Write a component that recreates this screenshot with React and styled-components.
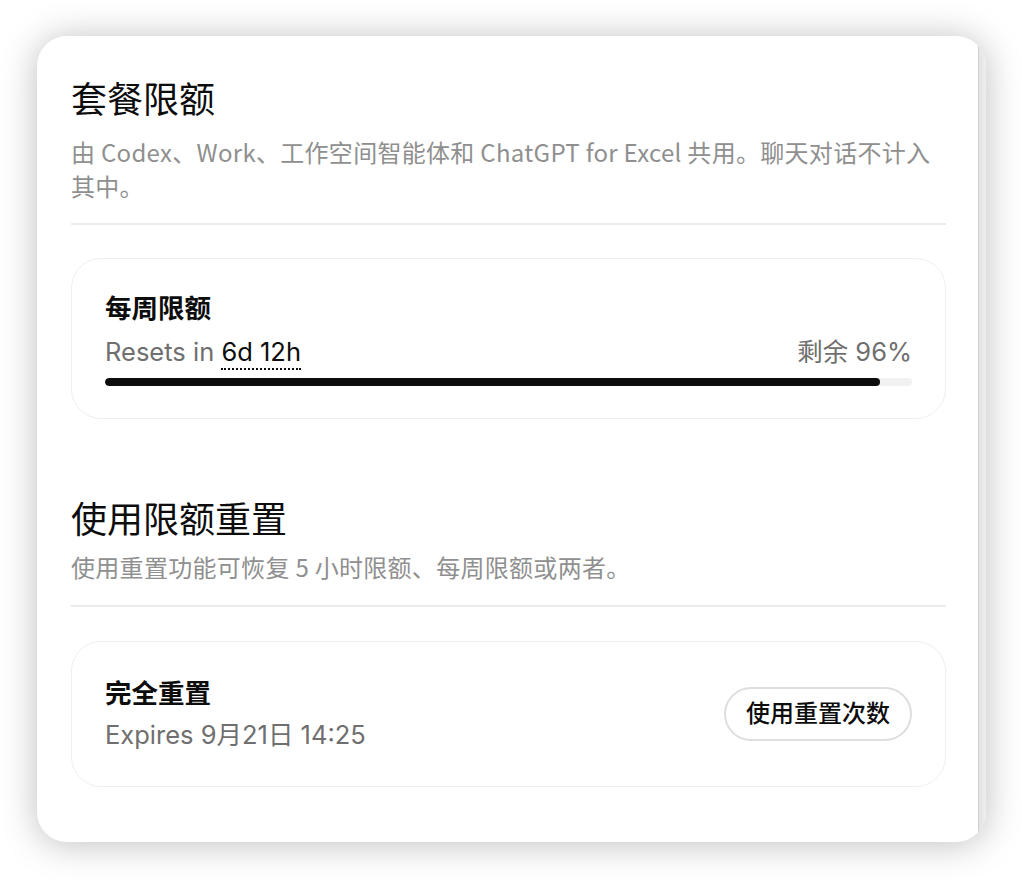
import React from "react";
import styled, { createGlobalStyle } from "styled-components";

const Global = createGlobalStyle`
  html, body { margin: 0; padding: 0; background: #ffffff; }
  body {
    font-family: "Inter", "Noto Sans CJK SC", sans-serif;
    color: #0d0d0d;
    -webkit-font-smoothing: antialiased;
  }
  * { box-sizing: border-box; }
`;

const Page = styled.div`
  padding: 36px 0 37px 37px;
`;

const Panel = styled.div`
  width: 949px;
  display: flex;
  background: #ffffff;
  border-radius: 30px;
  overflow: hidden;
  box-shadow: 0 2px 36px rgba(0, 0, 0, 0.26);
`;

const Content = styled.div`
  flex: 1;
  display: flex;
  flex-direction: column;
  padding: 42px 32px 55px 34px;
`;

const Gutter = styled.div`
  width: 8px;
  flex: none;
  border-left: 1px solid #d0d0d0;
  background: linear-gradient(to right, #e3e3e3, #eeeeee);
`;

const SectionTitle = styled.h2`
  margin: ${(p) => p.$top || 0}px 0 0;
  font-size: 36px;
  line-height: 44px;
  font-weight: 400;
  color: #0d0d0d;
`;

const Description = styled.p`
  margin: ${(p) => p.$top}px 0 0;
  font-family: "Noto Sans CJK SC", sans-serif;
  font-size: 24px;
  line-height: 34px;
  letter-spacing: 0.3px;
  color: #8f8f8f;
`;

const Divider = styled.hr`
  margin: ${(p) => p.$top}px 0 0;
  border: none;
  height: 2px;
  background: #ebebeb;
`;

const Card = styled.div`
  margin-top: ${(p) => p.$top}px;
  border: 1px solid #efefef;
  border-radius: 30px;
  padding: ${(p) => p.$pad}px 33px;
  display: flex;
  flex-direction: ${(p) => (p.$row ? "row" : "column")};
  align-items: ${(p) => (p.$row ? "center" : "stretch")};
  justify-content: space-between;
`;

const CardTitle = styled.div`
  font-size: 26.5px;
  line-height: 34px;
  font-weight: 600;
  color: #0d0d0d;
`;

const InfoRow = styled.div`
  margin-top: ${(p) => p.$gap}px;
  display: flex;
  justify-content: space-between;
  font-size: 25.5px;
  line-height: 34px;
  color: #6f6f6f;
`;

const Dotted = styled.span`
  color: #0d0d0d;
  border-bottom: 2px dotted #0d0d0d;
  padding-bottom: 1px;
`;

const Track = styled.div`
  margin-top: 9px;
  height: 8px;
  border-radius: 4px;
  background: #f1f1f1;
  overflow: hidden;
`;

const Fill = styled.div`
  height: 100%;
  border-radius: 4px;
  background: #0d0d0d;
`;

const Stack = styled.div`
  display: flex;
  flex-direction: column;
`;

const PillButton = styled.button`
  font-family: inherit;
  font-size: 24px;
  font-weight: 500;
  line-height: 32px;
  color: #0d0d0d;
  background: #ffffff;
  border: 2px solid #dedede;
  border-radius: 999px;
  height: 54px;
  padding: 0 20px;
  cursor: pointer;
`;

export default function App() {
  const remaining = 96;
  return (
    <>
      <Global />
      <Page lang="zh-CN">
        <Panel>
          <Content>
            <SectionTitle>套餐限额</SectionTitle>
            <Description $top={13}>
              由 Codex、Work、工作空间智能体和 ChatGPT for Excel 共用。聊天对话不计入其中。
            </Description>
            <Divider $top={20} />
            <Card $top={33} $pad={32}>
              <CardTitle>每周限额</CardTitle>
              <InfoRow $gap={10}>
                <span>
                  Resets in <Dotted>6d 12h</Dotted>
                </span>
                <span>剩余 {remaining}%</span>
              </InfoRow>
              <Track>
                <Fill style={{ width: `${remaining}%` }} />
              </Track>
            </Card>

            <SectionTitle $top={79}>使用限额重置</SectionTitle>
            <Description $top={8}>使用重置功能可恢复 5 小时限额、每周限额或两者。</Description>
            <Divider $top={21} />
            <Card $top={34} $pad={34} $row>
              <Stack>
                <CardTitle>完全重置</CardTitle>
                <InfoRow $gap={8}>Expires 9月21日 14:25</InfoRow>
              </Stack>
              <PillButton>使用重置次数</PillButton>
            </Card>
          </Content>
          <Gutter />
        </Panel>
      </Page>
    </>
  );
}
